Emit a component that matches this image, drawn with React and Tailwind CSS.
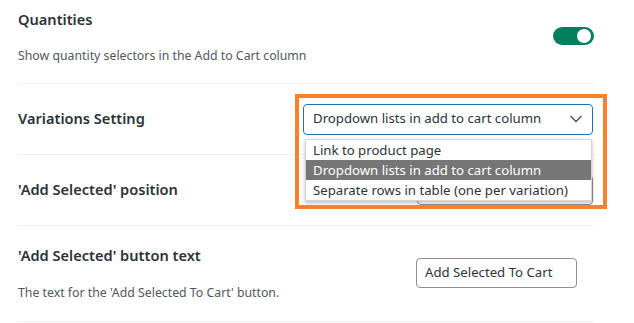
import React from 'react';

const font = { fontFamily: '"Noto Sans", "Open Sans", sans-serif' };

function Toggle() {
  return (
    <div className="mt-[27px] flex h-[18px] w-[41px] items-center justify-end rounded-full bg-[#00805f] px-[3px]">
      <div className="h-[14px] w-[14px] rounded-full bg-white" />
    </div>
  );
}

function Chevron() {
  return (
    <svg width="12" height="8" viewBox="0 0 12 8" fill="none">
      <path d="M1 1.5l5 5 5-5" stroke="#50575e" strokeWidth="1.5" strokeLinecap="round" strokeLinejoin="round" />
    </svg>
  );
}

export default function App() {
  const options = [
    'Link to product page',
    'Dropdown lists in add to cart column',
    'Separate rows in table (one per variation)',
  ];

  return (
    <div className="relative h-[323px] w-[634px] overflow-hidden bg-white text-[#1d2327]" style={font}>
      <div className="pl-[18px] pr-[40px]">
        {/* Quantities */}
        <div className="flex items-start justify-between border-b border-[#f0f0f1] pb-[17px]">
          <div>
            <h3 className="pt-[9px] text-[14.6px] font-semibold leading-[20px] text-[#2c3338]">Quantities</h3>
            <p className="mt-[17px] text-[12.3px] leading-[20px] text-[#50575e]">
              Show quantity selectors in the Add to Cart column
            </p>
          </div>
          <Toggle />
        </div>

        {/* Variations */}
        <div className="flex h-[71px] items-center border-b border-[#f0f0f1]">
          <div className="w-[285px] text-[14.6px] font-semibold text-[#2c3338]">Variations Setting</div>
          <div className="flex h-[31px] w-[290px] items-center justify-between rounded-[4px] border-[1.5px] border-[#2271b1] pl-[9px] pr-[10px] text-[13.2px] text-[#2c3338]">
            <span>Dropdown lists in add to cart column</span>
            <Chevron />
          </div>
        </div>

        {/* Add Selected position */}
        <div className="flex h-[71px] items-center border-b border-[#f0f0f1]">
          <div className="w-[399px] text-[14.6px] font-semibold text-[#2c3338]">'Add Selected' position</div>
          <div className="h-[30px] w-[176px] rounded-[4px] border border-[#8c8f94]" />
        </div>

        {/* Button text */}
        <div className="flex items-start border-b border-[#f0f0f1] pb-[18px]">
          <div className="w-[398px]">
            <h3 className="pt-[19px] text-[14.6px] font-semibold leading-[20px] text-[#2c3338]">'Add Selected' button text</h3>
            <p className="mt-[18px] text-[12.3px] leading-[20px] text-[#50575e]">
              The text for the 'Add Selected To Cart' button.
            </p>
          </div>
          <div className="mt-[32px] flex h-[30px] w-[161px] items-center rounded-[4px] border border-[#8c8f94] px-[8px] text-[13.2px] text-[#2c3338]">
            Add Selected To Cart
          </div>
        </div>
      </div>

      {/* open dropdown list */}
      <div className="absolute left-[305px] top-[139px] w-[287px] border border-[#d5d5d5] bg-white text-[13.2px] text-[#2c3338] shadow-[0_2px_4px_rgba(0,0,0,0.25)]">
        {options.map((o, i) => (
          <div
            key={o}
            className={`h-[20px] pl-[7px] leading-[20px] ${i === 1 ? 'bg-[#767676] text-white' : ''}`}
          >
            {o}
          </div>
        ))}
      </div>

      {/* highlight annotation */}
      <div className="pointer-events-none absolute left-[295px] top-[94px] h-[115px] w-[312px] border-[4px] border-[#fd7f27]" />
    </div>
  );
}
